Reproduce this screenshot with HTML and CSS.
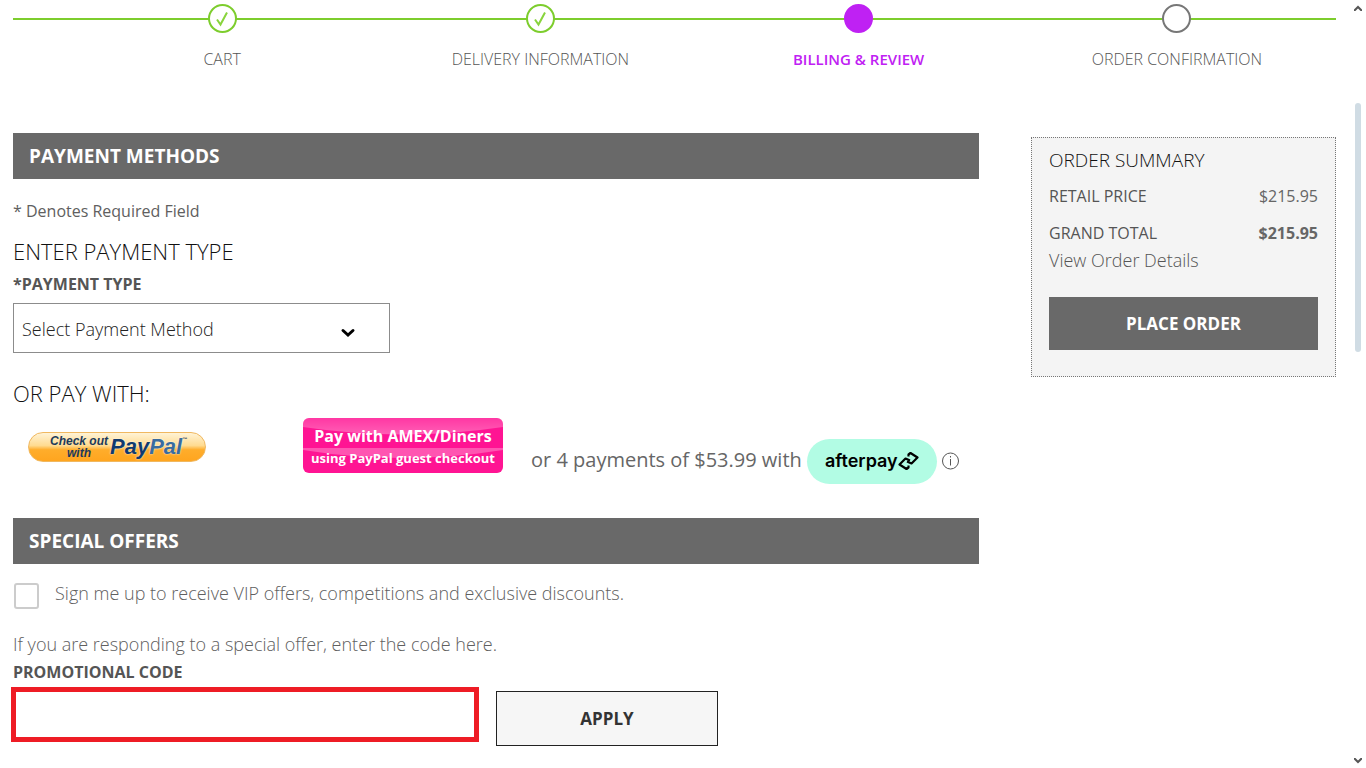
FILE: index.html
```html
<!DOCTYPE html>
<html lang="en">
<head>
<meta charset="utf-8">
<title>Billing &amp; Review</title>
<link rel="stylesheet" href="styles.css">
</head>
<body>
<div class="page">
  <div class="checkout">
    <ol class="steps">
      <li class="step"><span class="dot done"><svg width="16" height="18" viewBox="0 0 16 18"><path d="M3 9.5L6.5 14.5L13 2.5" fill="none" stroke="#88d43c" stroke-width="2"/></svg></span>CART</li>
      <li class="step"><span class="dot done"><svg width="16" height="18" viewBox="0 0 16 18"><path d="M3 9.5L6.5 14.5L13 2.5" fill="none" stroke="#88d43c" stroke-width="2"/></svg></span>DELIVERY INFORMATION</li>
      <li class="step current"><span class="dot"></span>BILLING &amp; REVIEW</li>
      <li class="step"><span class="dot"></span>ORDER CONFIRMATION</li>
    </ol>
    <div class="columns">
      <main class="main">
        <h1 class="bar">PAYMENT METHODS</h1>
        <p class="required">* Denotes Required Field</p>
        <h2 class="heading type-heading">ENTER PAYMENT TYPE</h2>
        <label class="label type-label" for="type">*PAYMENT TYPE</label>
        <div class="select-wrap">
          <select class="select" id="type"><option>Select Payment Method</option></select>
          <svg class="chevron" width="16" height="12" viewBox="0 0 16 12"><path d="M3 3.5L8 8L13 3.5" fill="none" stroke="#000" stroke-width="3" stroke-linecap="round"/></svg>
        </div>
        <h2 class="heading pay-heading">OR PAY WITH:</h2>
        <div class="pay">
          <button class="paypal" type="button"><span class="paypal-text"><span>Check out</span><span>with</span></span><span class="paypal-logo">Pay<span class="pal">Pal</span></span><span class="tm">™</span></button>
          <button class="amex" type="button">
            <svg class="gloss" viewBox="0 0 200 55" preserveAspectRatio="none"><defs><linearGradient id="shine" x2="0" y2="1"><stop stop-color="#fff" stop-opacity=".15"/><stop offset="1" stop-color="#fff" stop-opacity=".32"/></linearGradient></defs><path d="M0 0H200V9Q100 24 0 9Z" fill="url(#shine)"/><path d="M0 30H200V32Q100 48 0 32Z" fill="#fff" fill-opacity=".28"/></svg>
            <span class="amex-top">Pay with AMEX/Diners</span><span class="amex-sub">using PayPal guest checkout</span></button>
          <div class="afterpay"><span class="instalments">or 4 payments of $53.99 with</span>
            <span class="pill">afterpay<svg width="21" height="20" viewBox="0 0 21 20"><g fill="none" stroke="#000" stroke-width="2.2" stroke-linejoin="round"><path d="M10.5 5.5V3.5L12.5 2L19.5 6.5L13.5 12.5L9 10.5"/><path d="M10.5 14.5V16.5L8.5 18L1.5 13.5L7.5 7.5L12 9.5"/></g></svg></span>
            <a class="info" href="#" aria-label="Afterpay information"><svg width="18" height="18" viewBox="0 0 18 18"><circle cx="8.5" cy="8" r="8" fill="none" stroke="#555"/><path d="M8.5 6V12.500M8.5 3V4.500" stroke="#555"/></svg></a></div>
        </div>
        <h1 class="bar offers">SPECIAL OFFERS</h1>
        <div class="signup"><input class="check" type="checkbox" id="vip"><label for="vip">Sign me up to receive VIP offers, competitions and exclusive discounts.</label></div>
        <p class="hint">If you are responding to a special offer, enter the code here.</p>
        <label class="label promo-label" for="promo">PROMOTIONAL CODE</label>
        <div class="promo"><input class="promo-input" id="promo" type="text"><button class="apply" type="button">APPLY</button></div>
      </main>
      <aside class="summary">
        <h2 class="summary-title">ORDER SUMMARY</h2>
        <div class="row"><span>RETAIL PRICE</span><span class="price">$215.95</span></div>
        <div class="row total"><span>GRAND TOTAL</span><strong class="price">$215.95</strong></div>
        <a class="details" href="#">View Order Details</a>
        <button class="place" type="button">PLACE ORDER</button>
      </aside>
    </div>
  </div>
  <div class="scroll" aria-hidden="true">
    <svg width="8" height="6" viewBox="0 0 8 6"><path d="M0 6L4 2L8 6" fill="none" stroke="#555" stroke-width="2"/></svg>
    <div class="track"><div class="thumb"></div></div>
    <svg width="8" height="6" viewBox="0 0 8 6"><path d="M0 0L4 4L8 0" fill="none" stroke="#555" stroke-width="2"/></svg>
  </div>
</div>
</body>
</html>
```
FILE: styles.css
```css
* { box-sizing: border-box; }
body { margin: 0; background: #fff; color: #606060; font: 400 16px/24px "Open Sans", sans-serif; }
h1, h2, p, ol { margin: 0; padding: 0; }
button, input, select { font-family: inherit; margin: 0; }
button { cursor: pointer; }
svg { display: block; flex: none; }

.page { display: flex; min-height: 100vh; }
.checkout { flex: 1; padding: 4px 17px 0 13px; }

.steps {
  display: flex; list-style: none; padding-left: 50px;
  background: linear-gradient(#7dcd2d, #7dcd2d) 0 14px / 100% 2px no-repeat;
}
.step { flex: 1; display: flex; flex-direction: column; align-items: center; gap: 14px; font-size: 16px; font-weight: 300; color: #555; }
.dot { display: flex; align-items: center; justify-content: center; width: 29px; height: 29px; border: 2px solid #777; border-radius: 50%; background: #fff; }
.dot.done { border-color: #7dcd2d; }
.current { color: #bf21f3; font-size: 15px; font-weight: 600; }
.current .dot { background: #bf21f3; border-color: #bf21f3; }

.columns { display: flex; align-items: flex-start; gap: 52px; margin-top: 62px; }
.main { flex: 1; min-width: 0; }
.bar { padding: 0 16px; background: #696969; color: #fff; font-size: 19px; line-height: 46px; font-weight: 700; }
.required { margin-top: 20px; }
.heading { font-size: 22px; line-height: 28px; font-weight: 340; color: #111; }
.type-heading { margin-top: 14px; }
.label { display: block; font-size: 16px; font-weight: 700; color: #555; }
.type-label { margin-top: 7px; }
.select-wrap { position: relative; width: 377px; margin-top: 7px; }
.select { appearance: none; display: block; width: 100%; height: 50px; padding: 2px 8px 0; border: 1px solid #8c8c8c; border-radius: 0; background: #fff; color: #222; font-size: 18px; font-weight: 340; }
.chevron { position: absolute; right: 34px; top: 24px; pointer-events: none; }
.pay-heading { margin-top: 26px; }

.pay { display: flex; align-items: flex-start; margin-top: 11px; padding-left: 15px; }
.paypal {
  display: flex; align-items: center; width: 178px; height: 30px; margin: 14px 97px 0 0; padding: 0 0 0 21px;
  border: 1px solid #f0b860; border-radius: 15px; color: #1c3a5c;
  background: linear-gradient(#fff3d6, #ffdb90 45%, #ffad2b 60%, #ffa51f);
  font-family: "Liberation Sans", sans-serif; font-weight: 700; font-style: italic;
}
.paypal-text { display: flex; flex-direction: column; align-items: center; font-size: 12px; line-height: 12px; }
.paypal-logo { margin-left: 2px; font-size: 22px; line-height: 24px; color: #103a6e; text-shadow: 0 0 2px #fff; }
.pal { color: #3a6c9f; }
.tm { align-self: flex-start; font-size: 5px; line-height: 12px; }
.amex { position: relative; width: 200px; height: 55px; padding: 2px 0 0; border: 0; border-radius: 6px; overflow: hidden; background: #ff1493; color: #fff; font-weight: 700; }
.gloss { position: absolute; inset: 0; width: 100%; height: 100%; }
.amex-top, .amex-sub { position: relative; display: block; white-space: nowrap; }
.amex-top { font-size: 16px; line-height: 22px; }
.amex-sub { font-size: 13px; line-height: 22px; }
.afterpay { display: flex; align-items: center; margin: 21px 0 0 28px; color: #666; font-size: 20px; line-height: 28px; white-space: nowrap; }
.instalments { padding-bottom: 4px; }
.pill { display: flex; align-items: center; justify-content: center; width: 130px; height: 45px; margin: 0 5px; padding-bottom: 2px; border-radius: 23px; background: #b2fce4; color: #000; font: 600 18px/24px Inter, sans-serif; }
.info svg { overflow: visible; }

.offers { margin-top: 34px; }
.signup { display: flex; align-items: flex-start; gap: 16px; margin: 17px 0 0 1px; font-size: 18px; font-weight: 340; }
.check { appearance: none; width: 25px; height: 26px; margin-top: 2px; border: 2px solid #ccc; border-radius: 3px; background: #fff; }
.hint { margin-top: 23px; font-size: 18px; font-weight: 340; }
.promo-label { margin-top: 4px; }
.promo { display: flex; align-items: flex-start; gap: 17px; margin: 3px 0 0 -2px; }
.promo-input { width: 468px; height: 55px; padding: 0 12px; border: 5px solid #ee1c25; background: #fff; font-size: 18px; }
.apply { width: 222px; height: 55px; margin-top: 4px; border: 1px solid #222; background: #f6f6f6; color: #333; font-size: 17px; font-weight: 700; }

.summary { width: 305px; margin-top: 4px; padding: 8px 17px 26px; border: 1px dotted #777; background: #f4f4f4; }
.summary-title { font-size: 19px; line-height: 28px; font-weight: 340; color: #111; }
.row { display: flex; justify-content: space-between; margin-top: 10px; color: #555; }
.total { margin-top: 13px; }
.price { color: #666; }
.details { display: block; margin-top: 3px; font-size: 18px; font-weight: 340; color: #555; text-decoration: none; }
.place { display: block; width: 100%; height: 53px; margin-top: 25px; border: 0; background: #696969; color: #fff; font-size: 17px; font-weight: 700; }

.scroll { display: flex; flex-direction: column; align-items: center; width: 13px; margin-top: 5px; padding: 0 3px 4px 0; }
.track { flex: 1; padding-top: 92px; }
.thumb { width: 6px; height: 249px; border-radius: 3px; background: #d0dce4; }
```
